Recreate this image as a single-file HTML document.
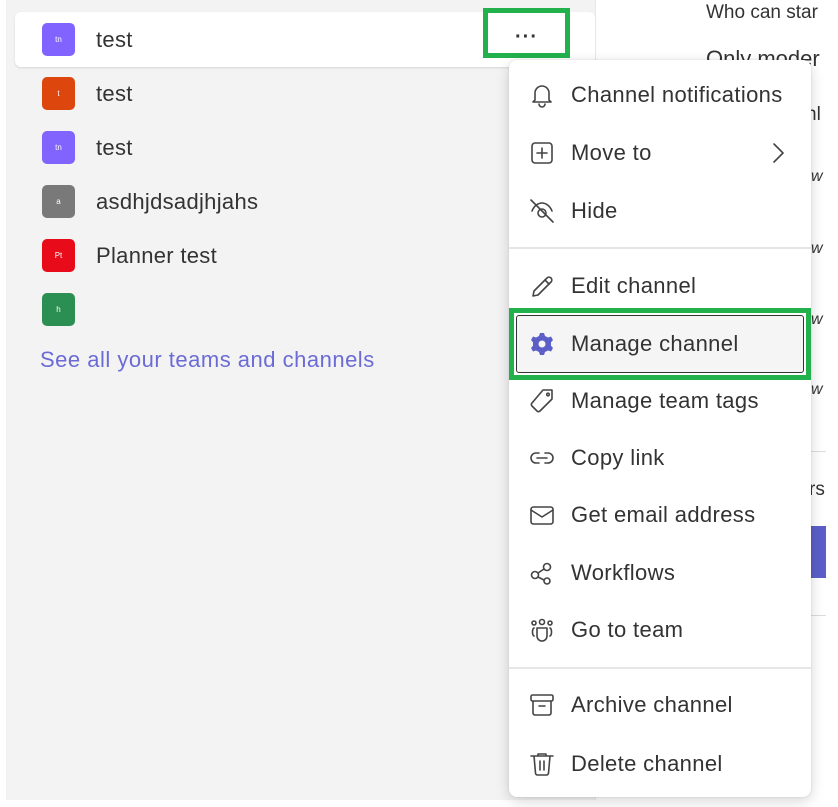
<!DOCTYPE html>
<html><head><meta charset="utf-8"><style>
*{margin:0;padding:0;box-sizing:border-box}
body{width:838px;height:807px;background:#fff;position:relative;overflow:hidden;font-family:"Liberation Sans",sans-serif;color:#242424}
.left{position:absolute;left:6px;top:0;width:589px;height:800px;background:#f3f3f3}
.sel{position:absolute;left:15px;top:12px;width:580px;height:55px;background:#fff;border-radius:6px;box-shadow:0 1px 2px rgba(0,0,0,.12)}
.row{position:absolute;left:42px;height:33px;display:flex;align-items:center}
.av{width:33px;height:33px;border-radius:5px;color:#fff;font-size:8px;display:flex;align-items:center;justify-content:center;opacity:.95}
.row span{margin-left:21px;font-size:22px;letter-spacing:0.3px;color:#333}
.link{position:absolute;left:40px;top:347px;font-size:22px;letter-spacing:0.5px;color:#6b6bd6}
.dots{position:absolute;left:483px;top:8px;width:87px;height:50px;border:5px solid #22b14c;text-align:center;font-size:20px;line-height:20px;padding-top:14px;font-weight:bold;letter-spacing:1px;color:#333}
.rt{position:absolute;font-size:19px;color:#333;white-space:nowrap}
.menu{position:absolute;left:509px;top:60px;width:302px;height:737px;background:#fff;border-radius:8px;box-shadow:0 4px 14px rgba(0,0,0,.16),0 0 2px rgba(0,0,0,.12)}
.it{position:absolute;left:0;width:302px;height:40px;display:flex;align-items:center;font-size:22px;letter-spacing:0.35px;color:#333}
.it svg{position:absolute;left:18px;width:30px;height:30px;fill:none;stroke:#444;stroke-width:1.6;stroke-linecap:round;stroke-linejoin:round}
.it span{position:absolute;left:62px;white-space:nowrap}
.div{position:absolute;left:0;width:302px;height:2px;background:#e6e6e6}
.hl{position:absolute;left:0;top:248px;width:302px;height:72px;border:5px solid #22b14c}
.hl div{position:absolute;left:2px;top:2px;right:2px;bottom:2px;background:#f5f5f5;border:1.5px solid #333;border-radius:3px}
</style></head><body>
<div class="left"></div>
<div class="sel"></div>
<div class="row" style="top:23px"><div class="av" style="background:#7b5cff">tn</div><span>test</span></div>
<div class="row" style="top:77px"><div class="av" style="background:#dc3d00">t</div><span>test</span></div>
<div class="row" style="top:131px"><div class="av" style="background:#7b5cff">tn</div><span>test</span></div>
<div class="row" style="top:185px"><div class="av" style="background:#737373">a</div><span>asdhjdsadjhjahs</span></div>
<div class="row" style="top:239px"><div class="av" style="background:#e8000f">Pt</div><span>Planner test</span></div>
<div class="row" style="top:293px"><div class="av" style="background:#218a4b">h</div></div>
<div class="link">See all your teams and channels</div>
<div class="dots">···</div>
<div style="position:absolute;left:595px;top:0;width:1px;height:800px;background:#e8e8e8"></div>
<div style="position:absolute;left:826px;top:0;width:12px;height:807px;background:#fff"></div>
<div class="rt" style="left:706px;top:2px">Who can star</div>
<div class="rt" style="left:706px;top:46px;font-size:22px">Only moder</div>
<div class="rt" style="left:806px;top:104px">nl</div>
<div class="rt" style="left:811px;top:168px;font-style:italic;font-size:16px">w</div>
<div class="rt" style="left:811px;top:240px;font-style:italic;font-size:16px">w</div>
<div class="rt" style="left:811px;top:311px;font-style:italic;font-size:16px">w</div>
<div class="rt" style="left:811px;top:381px;font-style:italic;font-size:16px">w</div>
<div style="position:absolute;left:811px;top:451px;width:15px;height:1px;background:#ddd"></div>
<div class="rt" style="left:809px;top:479px">rs</div>
<div style="position:absolute;left:811px;top:526px;width:15px;height:52px;background:#5b5fc7"></div>
<div style="position:absolute;left:811px;top:615px;width:15px;height:1px;background:#ddd"></div>
<div class="menu">
<div class="it" style="top:15px"><svg viewBox="0 0 30 30"><path d="M8 20V13a7 7 0 0 1 14 0v7l2 2H6z"/><path d="M12 24a3 3 0 0 0 6 0"/></svg><span>Channel notifications</span></div>
<div class="it" style="top:73px"><svg viewBox="0 0 30 30"><rect x="5" y="5" width="20" height="20" rx="3"/><path d="M15 10v10M10 15h10"/></svg><span>Move to</span><svg viewBox="0 0 30 30" style="left:254px"><path d="M11 6l9 9-9 9"/></svg></div>
<div class="it" style="top:131px"><svg viewBox="0 0 30 30"><path d="M4 4l22 22"/><path d="M5 15c2-5 6-8 10-8s8 3 10 8"/><circle cx="15" cy="17" r="4"/></svg><span>Hide</span></div>
<div class="div" style="top:187px"></div>
<div class="it" style="top:206px"><svg viewBox="0 0 30 30"><path d="M6 25l1-5L20 7a2.8 2.8 0 0 1 4 4L11 24z"/><path d="M18 9l4 4"/></svg><span>Edit channel</span></div>
<div class="hl"><div></div></div>
<div class="it" style="top:264px"><svg viewBox="0 0 30 30" style="stroke:none;fill:#5b5fc7"><path d="M13 4h4l1 3 3 1.5 3-1 2 3.5-2 2.3v3.4l2 2.3-2 3.5-3-1-3 1.5-1 3h-4l-1-3-3-1.5-3 1-2-3.5 2-2.3v-3.4l-2-2.3 2-3.5 3 1L12 7z"/><circle cx="15" cy="15" r="3.5" fill="#f5f5f5"/></svg><span>Manage channel</span></div>
<div class="it" style="top:321px"><svg viewBox="0 0 30 30"><path d="M16 4h9v9L13 25a2 2 0 0 1-3 0l-5-5a2 2 0 0 1 0-3z"/><circle cx="21" cy="8.5" r="1.3"/></svg><span>Manage team tags</span></div>
<div class="it" style="top:378px"><svg viewBox="0 0 30 30"><path d="M12 10H9a5 5 0 0 0 0 10h3M18 10h3a5 5 0 0 1 0 10h-3M10 15h10"/></svg><span>Copy link</span></div>
<div class="it" style="top:435px"><svg viewBox="0 0 30 30"><rect x="4" y="7" width="22" height="17" rx="2.5"/><path d="M4 10l11 7 11-7"/></svg><span>Get email address</span></div>
<div class="it" style="top:493px"><svg viewBox="0 0 30 30"><circle cx="8" cy="17" r="3.5"/><circle cx="20" cy="9" r="3.5"/><circle cx="20" cy="23" r="3"/><path d="M11 15l6-4M11 19l6 3"/></svg><span>Workflows</span></div>
<div class="it" style="top:550px"><svg viewBox="0 0 30 30"><circle cx="15" cy="7" r="2.5"/><circle cx="7" cy="8" r="2"/><circle cx="23" cy="8" r="2"/><path d="M10 13h10v8a5 5 0 0 1-10 0z"/><path d="M7 13c-2 1-2 7 0 8M23 13c2 1 2 7 0 8"/></svg><span>Go to team</span></div>
<div class="div" style="top:607px"></div>
<div class="it" style="top:625px"><svg viewBox="0 0 30 30"><rect x="4" y="5" width="22" height="6" rx="1.5"/><path d="M6 11v12a2 2 0 0 0 2 2h14a2 2 0 0 0 2-2V11M12 16h6"/></svg><span>Archive channel</span></div>
<div class="it" style="top:684px"><svg viewBox="0 0 30 30"><path d="M4 7h22M11 7V5h8v2M7 7l1.5 17a2 2 0 0 0 2 2h9a2 2 0 0 0 2-2L23 7M13 12v9M17 12v9"/></svg><span>Delete channel</span></div>
</div>
</body></html>
